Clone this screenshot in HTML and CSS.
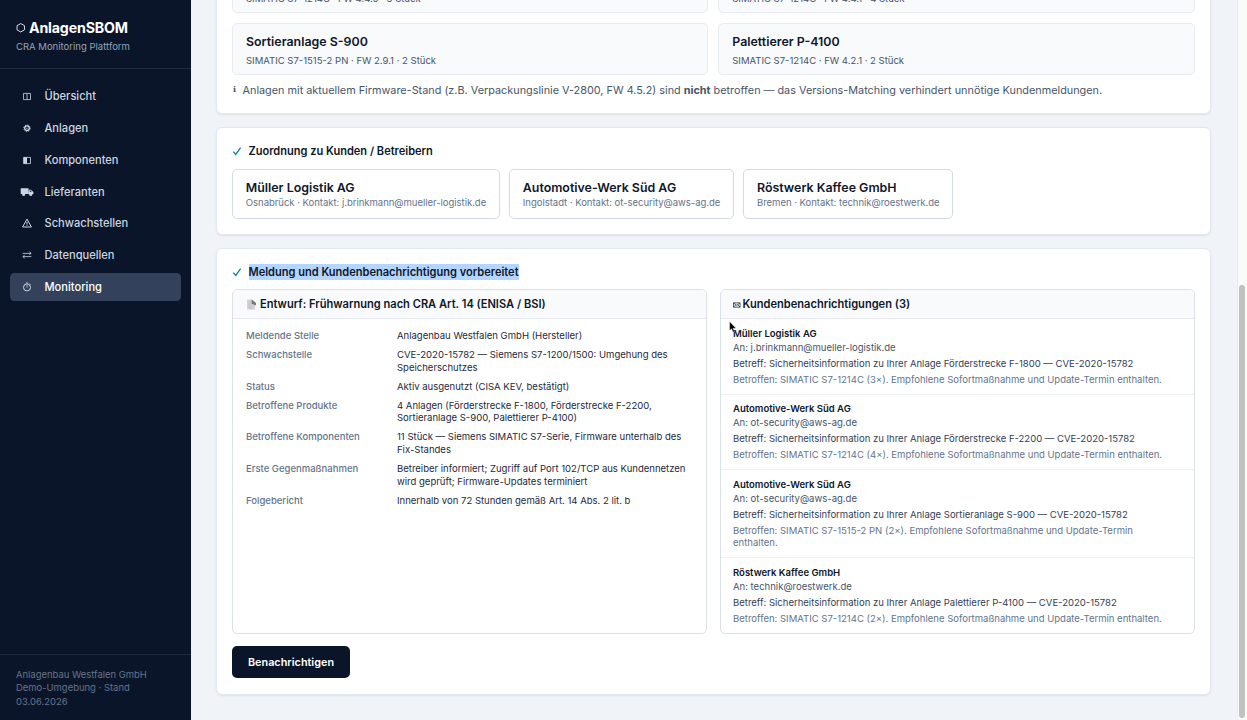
FILE: index.html
```html
<!DOCTYPE html>
<html lang="de">
<head>
<meta charset="utf-8">
<title>AnlagenSBOM – Monitoring</title>
<link rel="stylesheet" href="styles.css">
</head>
<body>
<div class="app">
  <aside class="sidebar">
    <header class="brand">
      <div class="brand-name"><svg class="hex" viewBox="0 0 10 10"><path d="M5 .6 8.9 2.8v4.4L5 9.4 1.1 7.2V2.8z"/></svg><span>AnlagenSBOM</span></div>
      <div class="brand-sub">CRA Monitoring Plattform</div>
    </header>
    <nav class="nav">
      <a class="item"><svg class="ico" viewBox="0 0 14 14"><path class="s" d="M3.5 4.4h7v6.2h-7zM7 4.4v6.2"/></svg><span>Übersicht</span></a>
      <a class="item"><svg class="ico" viewBox="0 0 14 14"><circle class="s ring" cx="7" cy="7.2" r="2.3"/><circle class="s teeth" cx="7" cy="7.2" r="3.2"/><circle class="f" cx="7" cy="7.2" r=".7"/></svg><span>Anlagen</span></a>
      <a class="item"><svg class="ico" viewBox="0 0 14 14"><path class="s" d="M3.7 4.4h6.8v6.2H3.7z"/><path class="f" d="M3.5 4.3H7v6.4H3.5z"/></svg><span>Komponenten</span></a>
      <a class="item"><svg class="ico" viewBox="0 0 14 14"><path class="f" d="M.7 3.2h7.8v5.8H.7zM8.9 4.8h2l2.5 2.2v2.3H8.5z"/><circle class="f" cx="3.6" cy="9.4" r="1.5"/><circle class="f" cx="10.7" cy="9.4" r="1.5"/><path class="hole" d="M9.8 5.6h.9l1 1.1H9.8z"/></svg><span>Lieferanten</span></a>
      <a class="item"><svg class="ico" viewBox="0 0 14 14"><path class="s thick" d="M7 3.1 11.4 11H2.6zM7 5.8v2.7M7 9.1v.8"/></svg><span>Schwachstellen</span></a>
      <a class="item"><svg class="ico" viewBox="0 0 14 14"><path class="s" d="M2.6 5.4h8.4M9.3 3.8 11.2 5.4 9.3 6.8M11.4 8.6H3M4.7 7.2 2.8 8.6l1.9 1.5"/></svg><span>Datenquellen</span></a>
      <a class="item active"><svg class="ico" viewBox="0 0 14 14"><circle class="s thick" cx="7" cy="7.4" r="3.5"/><path class="s" d="M7 7.6V5.2M5.8 3h2.4M9.7 3.8l.9.8"/></svg><span>Monitoring</span></a>
    </nav>
    <footer class="side-foot">Anlagenbau Westfalen GmbH<br>Demo-Umgebung · Stand<br>03.06.2026</footer>
  </aside>

  <main class="main">
    <section class="card card-plants">
      <div class="plants">
        <div class="plant"><h3>Förderstrecke F-1800</h3><p>SIMATIC S7-1214C · FW 4.4.0 · 3 Stück</p></div>
        <div class="plant"><h3>Förderstrecke F-2200</h3><p>SIMATIC S7-1214C · FW 4.4.1 · 4 Stück</p></div>
        <div class="plant"><h3>Sortieranlage S-900</h3><p>SIMATIC S7-1515-2 PN · FW 2.9.1 · 2 Stück</p></div>
        <div class="plant"><h3>Palettierer P-4100</h3><p>SIMATIC S7-1214C · FW 4.2.1 · 2 Stück</p></div>
      </div>
      <p class="note"><span class="info">ℹ</span><span class="note-text">Anlagen mit aktuellem Firmware-Stand (z.B. Verpackungslinie V-2800, FW 4.5.2) sind <b>nicht</b> betroffen — das Versions-Matching verhindert unnötige Kundenmeldungen.</span></p>
    </section>

    <section class="card card-customers">
      <h2 class="step"><svg class="check" viewBox="0 0 10 10"><path d="M1.2 5.6 3.8 8.4 8.6 1.6"/></svg><span>Zuordnung zu Kunden / Betreibern</span></h2>
      <div class="customers">
        <div class="customer"><h3>Müller Logistik AG</h3><p>Osnabrück · Kontakt: j.brinkmann@mueller-logistik.de</p></div>
        <div class="customer"><h3>Automotive-Werk Süd AG</h3><p>Ingolstadt · Kontakt: ot-security@aws-ag.de</p></div>
        <div class="customer"><h3>Röstwerk Kaffee GmbH</h3><p>Bremen · Kontakt: technik@roestwerk.de</p></div>
      </div>
    </section>

    <section class="card card-report">
      <h2 class="step"><svg class="check" viewBox="0 0 10 10"><path d="M1.2 5.6 3.8 8.4 8.6 1.6"/></svg><span class="selected">Meldung und Kundenbenachrichtigung vorbereitet</span></h2>
      <div class="panels">
        <article class="panel">
          <h3 class="panel-head"><svg class="doc" viewBox="0 0 11 11"><path class="page" d="M1 .5h5.5L9 3.4v7.1H1z"/><path class="fold" d="M5.6.5v4.2L10 6.6V4z"/><path class="lines" d="M2 3h2.5M2 5h3M2 7h5M2 9h5"/></svg><span>Entwurf: Frühwarnung nach CRA Art. 14 (ENISA / BSI)</span></h3>
          <dl class="facts">
            <dt>Meldende Stelle</dt><dd>Anlagenbau Westfalen GmbH (Hersteller)</dd>
            <dt>Schwachstelle</dt><dd>CVE-2020-15782 — Siemens S7-1200/1500: Umgehung des<br>Speicherschutzes</dd>
            <dt>Status</dt><dd>Aktiv ausgenutzt (CISA KEV, bestätigt)</dd>
            <dt>Betroffene Produkte</dt><dd>4 Anlagen (Förderstrecke F-1800, Förderstrecke F-2200,<br>Sortieranlage S-900, Palettierer P-4100)</dd>
            <dt>Betroffene Komponenten</dt><dd>11 Stück — Siemens SIMATIC S7-Serie, Firmware unterhalb des<br>Fix-Standes</dd>
            <dt>Erste Gegenmaßnahmen</dt><dd>Betreiber informiert; Zugriff auf Port 102/TCP aus Kundennetzen<br>wird geprüft; Firmware-Updates terminiert</dd>
            <dt>Folgebericht</dt><dd>Innerhalb von 72 Stunden gemäß Art. 14 Abs. 2 lit. b</dd>
          </dl>
        </article>
        <article class="panel">
          <h3 class="panel-head mail-head"><svg class="mail" viewBox="0 0 8 6"><path d="M.5.7h7v4.6h-7zM.5.7 4 3.4 7.5.7M.5 5.3 3 2.8M7.5 5.3 5 2.8"/></svg><span>Kundenbenachrichtigungen (3)</span></h3>
          <div class="msg"><h4>Müller Logistik AG</h4><p class="to">An: j.brinkmann@mueller-logistik.de</p><p class="subj">Betreff: Sicherheitsinformation zu Ihrer Anlage Förderstrecke F-1800 — CVE-2020-15782</p><p class="body">Betroffen: SIMATIC S7-1214C (3×). Empfohlene Sofortmaßnahme und Update-Termin enthalten.</p></div>
          <div class="msg"><h4>Automotive-Werk Süd AG</h4><p class="to">An: ot-security@aws-ag.de</p><p class="subj">Betreff: Sicherheitsinformation zu Ihrer Anlage Förderstrecke F-2200 — CVE-2020-15782</p><p class="body">Betroffen: SIMATIC S7-1214C (4×). Empfohlene Sofortmaßnahme und Update-Termin enthalten.</p></div>
          <div class="msg"><h4>Automotive-Werk Süd AG</h4><p class="to">An: ot-security@aws-ag.de</p><p class="subj">Betreff: Sicherheitsinformation zu Ihrer Anlage Sortieranlage S-900 — CVE-2020-15782</p><p class="body">Betroffen: SIMATIC S7-1515-2 PN (2×). Empfohlene Sofortmaßnahme und Update-Termin<br>enthalten.</p></div>
          <div class="msg"><h4>Röstwerk Kaffee GmbH</h4><p class="to">An: technik@roestwerk.de</p><p class="subj">Betreff: Sicherheitsinformation zu Ihrer Anlage Palettierer P-4100 — CVE-2020-15782</p><p class="body">Betroffen: SIMATIC S7-1214C (2×). Empfohlene Sofortmaßnahme und Update-Termin enthalten.</p></div>
        </article>
      </div>
      <button class="btn">Benachrichtigen</button>
    </section>
  </main>
  <div class="scroll"><div class="thumb"></div></div>
  <svg class="cursor" viewBox="0 0 8 12"><path d="M.6.6v9l2-1.8 1.4 3.4 1.5-.6L4.1 7.3h2.9z"/></svg>
</div>
</body>
</html>
```
FILE: styles.css
```css
* { box-sizing: border-box; margin: 0; padding: 0; }
body { font-family: Inter, "Liberation Sans", sans-serif; color: #0f172a; overflow: hidden; }
h2, h3, h4 { font-weight: 600; }
p, h2, h3, h4, span, dt, dd { white-space: nowrap; }
svg { flex: none; }
.app { position: relative; display: flex; width: 1247px; height: 720px; overflow: hidden; background: #f0f3f8; }

.sidebar { width: 190.5px; flex: none; display: flex; flex-direction: column; background: #0b1529; }
.brand { height: 69px; padding: 17.5px 16px 0; border-bottom: 1px solid #1d293c; }
.brand-name { display: flex; align-items: center; gap: 3.5px; height: 19px; font-size: 14.2px; font-weight: 700; color: #fff; letter-spacing: -.16px; }
.hex { width: 9.5px; height: 9.5px; margin-top: 2px; fill: none; stroke: #e2e8f0; stroke-width: 1; }
.brand-sub { margin-top: 3px; font-size: 9.53px; line-height: 13px; color: #94a3b8; }
.nav { display: flex; flex-direction: column; gap: 3.25px; padding: 13.2px 9.5px 0; }
.item { display: flex; align-items: center; gap: 10.5px; height: 28.5px; padding-left: 10.5px; border-radius: 4.5px; font-size: 11.1px; font-weight: 500; color: #cbd5e1; }
.active { background: #33425a; color: #fff; }
.ico { width: 14px; height: 14px; color: #cbd5e1; }
.s { fill: none; stroke: currentColor; stroke-width: .8; }
.f { fill: currentColor; }
.hole { fill: #0b1529; }
.thick { stroke-width: 1; }
.ring { stroke-width: 1.3; }
.teeth { stroke-width: 1; stroke-dasharray: 1.25 1.25; }
.side-foot { margin-top: auto; height: 66px; padding: 12.5px 16px 0; border-top: 1px solid #1d293c; font-size: 9.45px; line-height: 13.6px; color: #64748b; white-space: nowrap; }

.main { width: 1046px; flex: none; padding: 0 26px 0 25.5px; }
.card { background: #fff; border: 1px solid #e2e8f0; border-radius: 6px; padding: 0 15px; box-shadow: 0 1px 2px rgba(15,23,42,.08); }
.card-plants { height: 154px; margin-top: -40px; margin-bottom: 13px; }
.plants { display: grid; grid-template-columns: 1fr 1fr; gap: 10px; }
.plant { height: 52px; padding: 9px 13px 0; background: #f9fafc; border: 1px solid #e7ecf2; border-radius: 5px; }
.plant h3, .customer h3 { font-size: 12.4px; line-height: 17px; }
.plant p { margin-top: 4px; font-size: 9.53px; line-height: 14px; color: #475569; }
.note { display: flex; align-items: center; height: 16px; margin-top: 6.5px; font-size: 10.85px; color: #475569; }
.info { width: 10.5px; padding-left: 1px; font-family: "DejaVu Sans"; font-size: 8px; }
.note b { font-weight: 700; }

.card-customers { height: 108px; margin-bottom: 13px; }
.step { display: flex; align-items: center; gap: 6.5px; height: 16px; margin-top: 15.4px; font-size: 11.05px; }
.check { width: 10px; height: 10px; fill: none; stroke: #0d8390; stroke-width: 1.3; }
.selected { background: #b4d5fe; line-height: 16px; }
.customers { display: flex; gap: 9px; margin-top: 9.2px; }
.customer { height: 50px; padding: 9px 12.8px 0; border: 1px solid #d3dae5; border-radius: 5px; }
.customer p { font-size: 9.53px; line-height: 14px; letter-spacing: -.025px; color: #64748b; }

.card-report { height: 447px; }
.panels { display: grid; grid-template-columns: 475px 475px; gap: 12.5px; height: 345px; margin-top: 8.8px; }
.panel { border: 1px solid #dbe1ea; border-radius: 5px; overflow: hidden; }
.panel-head { display: flex; align-items: center; gap: 3px; height: 29px; padding-left: 13px; background: #f8fafc; border-bottom: 1px solid #e5eaf1; font-size: 11.1px; }
.mail-head { gap: 2px; padding-left: 12.5px; }
.doc { width: 11px; height: 11px; }
.page { fill: #d4d4d7; }
.fold { fill: #77777c; }
.lines { fill: none; stroke: #b5b5ba; stroke-width: .5; }
.mail { width: 7.5px; height: 6px; margin-top: 2px; fill: none; stroke: #1e293b; stroke-width: .8; }
.facts { display: grid; grid-template-columns: 144.5px 1fr; column-gap: 6.5px; row-gap: 6.2px; padding: 10.6px 13px; font-size: 9.53px; line-height: 12.8px; }
.facts dt { color: #64748b; font-weight: 500; }
.facts dd { color: #1e293b; }
.msg { height: 75.5px; padding: 7.8px 12.5px 0; border-bottom: 1px solid #eef2f6; font-size: 9.53px; line-height: 12.8px; }
.msg:nth-of-type(3) { height: 88.3px; }
.msg:last-child { border-bottom: 0; }
.msg h4 { line-height: 13px; }
.to { margin-top: 2px; color: #475569; }
.subj { margin-top: 3px; color: #334155; }
.body { margin-top: 3px; color: #64748b; }
.btn { display: block; width: 118px; height: 32px; margin-top: 12px; border: 0; border-radius: 5px; background: #0b1529; color: #fff; font: 600 10.85px Inter, sans-serif; }

.scroll { flex: 1; display: flex; flex-direction: column; align-items: flex-end; padding: 285px 2px 2px 0; background: #fafafb; border-left: 1px solid #e8ebef; }
.thumb { width: 6px; flex: 1; border-radius: 3px; background: #c1c1c1; }
.cursor { position: absolute; left: 729px; top: 321px; width: 8px; height: 12px; fill: #000; stroke: #fff; stroke-width: .4; }
```
